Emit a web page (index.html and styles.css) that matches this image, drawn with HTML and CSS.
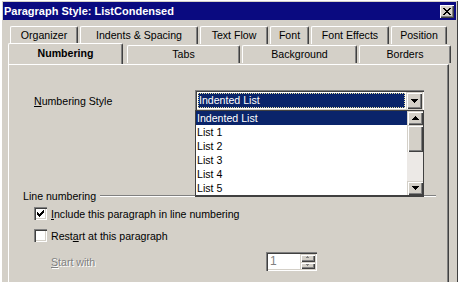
FILE: index.html
```html
<!DOCTYPE html>
<html>
<head>
<meta charset="utf-8">
<link rel="stylesheet" href="styles.css">
</head>
<body>
<div class="win">
  <div class="titlebar">
    <span class="title">Paragraph Style: ListCondensed</span>
    <span class="close"><svg width="8" height="7" viewBox="0 0 8 7" shape-rendering="crispEdges"><path d="M0 0h2v1h-2zM6 0h2v1h-2zM1 1h2v1h-2zM5 1h2v1h-2zM2 2h4v1h-4zM3 3h2v1h-2zM2 4h4v1h-4zM1 5h2v1h-2zM5 5h2v1h-2zM0 6h2v1h-2zM6 6h2v1h-2z" fill="#000"/></svg></span>
  </div>
  <div class="tabrow row1">
    <div class="tab t-org">Organizer</div>
    <div class="tab t-ind">Indents &amp; Spacing</div>
    <div class="tab t-tf">Text Flow</div>
    <div class="tab t-font">Font</div>
    <div class="tab t-fe">Font Effects</div>
    <div class="tab t-pos">Position</div>
  </div>
  <div class="tabrow row2">
    <div class="tab sel t-num">Numbering</div>
    <div class="tab t-tabs">Tabs</div>
    <div class="tab t-bg">Background</div>
    <div class="tab t-bor">Borders</div>
  </div>
  <div class="panel">
    <div class="style-row">
      <span class="lbl"><u>N</u>umbering Style</span>
      <div class="combo">
        <div class="combo-field"><span class="combo-sel">Indented List</span></div>
        <div class="btn drop"><svg width="7" height="4" viewBox="0 0 7 4" shape-rendering="crispEdges"><path d="M0 0h7v1h-7zM1 1h5v1h-5zM2 2h3v1h-3zM3 3h1v1h-1z" fill="#000"/></svg></div>
      </div>
    </div>
    <div class="group-head"><span>Line numbering</span><span class="rule"></span></div>
    <div class="check-row first">
      <span class="cb"><svg width="7" height="7" viewBox="0 0 7 7" shape-rendering="crispEdges"><path d="M6 0h1v3h-1zM5 1h1v3h-1zM4 2h1v3h-1zM3 3h1v3h-1zM2 4h1v3h-1zM1 3h1v3h-1zM0 2h1v3h-1z" fill="#000"/></svg></span>
      <span><u>I</u>nclude this paragraph in line numbering</span>
    </div>
    <div class="check-row">
      <span class="cb"></span>
      <span>Rest<u>a</u>rt at this paragraph</span>
    </div>
    <div class="start-row">
      <span class="disabled"><u>S</u>tart with</span>
      <div class="spin">
        <span class="spin-val">1</span>
        <div class="spin-btns">
          <div class="btn sbtn"><svg width="5" height="3" viewBox="0 0 5 3" shape-rendering="crispEdges"><path d="M2 0h1v1h-1zM1 1h3v1h-3z" fill="#808080"/></svg></div>
          <div class="btn sbtn"><svg width="5" height="3" viewBox="0 0 5 3" shape-rendering="crispEdges"><path d="M1 0h3v1h-3zM2 1h1v1h-1z" fill="#808080"/></svg></div>
        </div>
      </div>
    </div>
  </div>
  <div class="listbox">
    <div class="items">
      <div class="item hl">Indented List</div>
      <div class="item">List 1</div>
      <div class="item">List 2</div>
      <div class="item">List 3</div>
      <div class="item">List 4</div>
      <div class="item">List 5</div>
    </div>
    <div class="sbar">
      <div class="btn sb-up"><svg width="7" height="4" viewBox="0 0 7 4" shape-rendering="crispEdges"><path d="M3 0h1v1h-1zM2 1h3v1h-3zM1 2h5v1h-5zM0 3h7v1h-7z" fill="#000"/></svg></div>
      <div class="btn sb-thumb"></div>
      <div class="sb-track"></div>
      <div class="btn sb-down"><svg width="7" height="4" viewBox="0 0 7 4" shape-rendering="crispEdges"><path d="M0 0h7v1h-7zM1 1h5v1h-5zM2 2h3v1h-3zM3 3h1v1h-1z" fill="#000"/></svg></div>
    </div>
  </div>
</div>
</body>
</html>
```
FILE: styles.css
```css
* { box-sizing: border-box; }
html, body { margin: 0; padding: 0; }
body {
  font-family: "Liberation Sans", Arial, sans-serif;
  font-size: 10.6px;
  color: #000;
  background: #d4d0c8;
}
u { text-decoration: underline; text-underline-offset: 1px; }
.win {
  position: relative;
  width: 458px;
  height: 282px;
  overflow: hidden;
  background: #d4d0c8;
  padding: 2px 2px 0 3px;
  box-shadow: inset 2px 1px 0 #fff, inset -1px 0 0 #404040;
}
.titlebar {
  height: 18px;
  background: #0a0a80;
  display: flex;
  align-items: center;
  justify-content: space-between;
  padding: 0 2px 0 1px;
}
.title {
  color: #fff;
  font-weight: bold;
  font-size: 11px;
}
.close {
  width: 14px;
  height: 13px;
  background: #d4d0c8;
  display: flex;
  align-items: center;
  justify-content: center;
  box-shadow: inset 1px 1px 0 #fff, inset -1px -1px 0 #404040, inset -2px -2px 0 #808080;
}
.tabrow { display: flex; gap: 2px; margin-left: 7px; }
.row1 { margin-top: 6px; }
.row2 { margin-top: 1px; }
.tab {
  height: 18px;
  border-top: 1px solid #fff;
  border-left: 1px solid #fff;
  border-right: 1px solid #404040;
  border-radius: 2px 2px 0 0;
  box-shadow: inset -1px 0 0 #808080;
  text-align: center;
  line-height: 16px;
  background: #d4d0c8;
  white-space: nowrap;
}
.t-org { width: 68px; }
.t-ind { width: 118px; }
.t-tf { width: 68px; }
.t-font { width: 39px; }
.t-fe { width: 78px; }
.t-pos { width: 56px; }
.t-num { width: 111px; }
.t-tabs { width: 113px; }
.t-bg { width: 115px; }
.t-bor { width: 92px; }
.tab.sel {
  position: relative;
  z-index: 2;
  margin: -2px -2px 0 -2px;
  width: 115px;
  height: 21px;
  font-weight: bold;
  line-height: 18px;
}
.tab.sel + .tab { margin-left: 4px; }
.panel {
  margin-left: 5px;
  width: 441px;
  height: 230px;
  border-top: 1px solid #fff;
  border-left: 1px solid #fff;
  border-right: 1px solid #404040;
  box-shadow: inset -1px 0 0 #808080;
}
.style-row {
  display: flex;
  align-items: center;
  margin-top: 25px;
  padding-left: 25px;
  height: 21px;
}
.lbl { width: 161px; }
.combo {
  width: 229px;
  height: 21px;
  display: flex;
  padding: 2px;
  background: #fff;
  box-shadow: inset 1px 1px 0 #808080, inset 2px 2px 0 #404040, inset -1px -1px 0 #fff, inset -2px -2px 0 #d4d0c8;
}
.combo-field { flex: 1; padding: 1px; }
.combo-sel {
  display: block;
  height: 15px;
  background: #0a246a;
  color: #fff;
  outline: 1px dotted #e8e0a0;
  outline-offset: -1px;
  line-height: 14px;
  padding-left: 1px;
}
.btn {
  background: #d4d0c8;
  box-shadow: inset 1px 1px 0 #d4d0c8, inset 2px 2px 0 #fff, inset -1px -1px 0 #404040, inset -2px -2px 0 #808080;
  display: flex;
  align-items: center;
  justify-content: center;
}
.drop { width: 16px; height: 17px; }
.group-head {
  display: flex;
  align-items: center;
  margin-top: 78px;
  height: 13px;
  padding-left: 14px;
  padding-right: 12px;
}
.rule {
  flex: 1;
  margin-left: 4px;
  height: 2px;
  border-top: 1px solid #808080;
  border-bottom: 1px solid #fff;
}
.check-row {
  display: flex;
  align-items: center;
  gap: 4px;
  padding-left: 25px;
  height: 13px;
  margin-top: 9px;
}
.check-row.first { margin-top: 5px; }
.cb {
  width: 13px;
  height: 13px;
  background: #fff;
  display: flex;
  align-items: center;
  justify-content: center;
  box-shadow: inset 1px 1px 0 #808080, inset 2px 2px 0 #404040, inset -1px -1px 0 #fff, inset -2px -2px 0 #d4d0c8;
}
.start-row {
  display: flex;
  align-items: center;
  padding-left: 42px;
  margin-top: 10px;
  height: 19px;
}
.disabled {
  color: #808080;
  text-shadow: 1px 1px 0 #fff;
  width: 215px;
}
.spin {
  width: 51px;
  height: 19px;
  background: #fff;
  display: flex;
  align-items: center;
  padding: 2px;
  box-shadow: inset 1px 1px 0 #808080, inset 2px 2px 0 #404040, inset -1px -1px 0 #fff, inset -2px -2px 0 #d4d0c8;
}
.spin-val { flex: 1; color: #808080; font-size: 12px; padding-left: 2px; line-height: 15px; }
.spin-btns { display: flex; flex-direction: column; width: 15px; height: 15px; }
.sbtn { height: 7.5px; flex: 1; }
.listbox {
  position: absolute;
  left: 195px;
  top: 110px;
  width: 229px;
  height: 87px;
  background: #fff;
  border: 1px solid #404040;
  border-bottom-width: 2px;
  display: flex;
  z-index: 5;
}
.items { flex: 1; }
.item { height: 14px; line-height: 14px; padding-left: 1px; }
.item.hl { background: #0a246a; color: #fff; }
.sbar { width: 16px; display: flex; flex-direction: column; }
.sb-up { height: 14px; }
.sb-thumb { height: 27px; }
.sb-track { flex: 1; background: #ece9e6; }
.sb-down { height: 14px; }
```
